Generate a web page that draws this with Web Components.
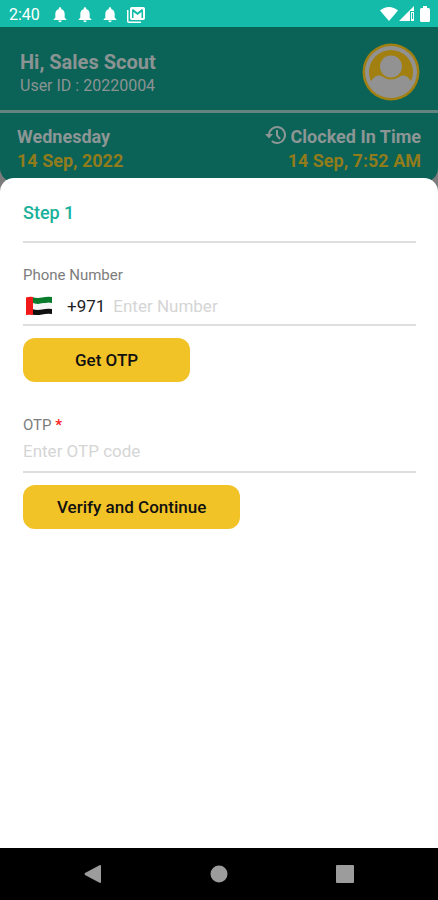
<!DOCTYPE html>
<html lang="en">
<head>
<meta charset="utf-8">
<meta name="viewport" content="width=device-width, initial-scale=1">
<title>Sales Scout</title>
<style>
html, body { height: 100%; margin: 0; }
body { font-family: Roboto, "Liberation Sans", sans-serif; background: #7b7b7b; }
</style>
</head>
<body>
<scout-app></scout-app>
<script>
const define = (name, html, setup = () => {}) => {
  const template = document.createElement('template');
  template.innerHTML = html;
  customElements.define(name, class extends HTMLElement {
    constructor() {
      super();
      this.attachShadow({ mode: 'open' }).append(template.content.cloneNode(true));
      setup(this, this.shadowRoot);
    }
  });
};

define('status-bar', `
<style>
:host { display: flex; align-items: center; height: 27px; padding: 0 8px 0 9px; background: #13bba8; color: #fff; box-sizing: border-box; }
time { font-size: 16px; line-height: 20px; padding-top: 2px; }
svg { display: block; fill: currentColor; }
.notes { display: flex; align-items: center; gap: 9px; margin-left: 12px; padding-top: 2px; }
.signals { display: flex; align-items: center; gap: 1px; margin-left: auto; }
</style>
<time>2:40</time>
<div class="notes">
  <svg width="16" height="16" viewBox="0 0 24 24"><path id="b" d="M12 23a2.6 2.6 0 0 0 2.6-2.6H9.4A2.6 2.6 0 0 0 12 23zm7-7v-6c0-3.5-2-6-5-6.800V2.500a2 2 0 0 0-4 0v.7C7 4 5 6.500 5 10v6l-2.500 2.500v1h19v-1z"/></svg>
  <svg width="16" height="16" viewBox="0 0 24 24"><use href="#b"/></svg>
  <svg width="16" height="16" viewBox="0 0 24 24"><use href="#b"/></svg>
  <svg width="18" height="16" viewBox="0 0 18 16"><path d="M0 3h1.500v11.500H14V16H1.800Q0 16 0 14.200z"/><path fill-rule="evenodd" d="M4.800 0h11.400Q18 0 18 1.800v9.400q0 1.800-1.800 1.800H4.800Q3 13 3 11.200V1.800Q3 0 4.800 0zM5 3v8h1.500V5l4 3 4-3v6H16V3l-1-1-4.500 3.500L6 2z"/></svg>
</div>
<div class="signals">
  <svg width="18" height="14" viewBox="0 0 18 14"><path d="M9 14 0 3.500Q4 0 9 0t9 3.500z"/></svg>
  <svg width="16" height="15" viewBox="0 0 16 15"><path d="M15 0v5h-4v10H0z"/><path d="M12 6h3v7h-1V7h-1v6h-1zM12 13h3v2h-3z"/></svg>
  <svg width="10" height="16" viewBox="0 0 10 16" style="margin-left:4px"><path d="M3 0h4v2h1.500Q10 2 10 3.500v11Q10 16 8.500 16h-7Q0 16 0 14.500v-11Q0 2 1.500 2H3z"/></svg>
</div>`);

define('user-header', `
<style>
:host { display: flex; align-items: center; justify-content: space-between; height: 86px; padding: 6px 18px 0 20px; box-sizing: border-box; background: #0b6257; color: #8b9393; border-bottom: 3px solid #648480; }
h1 { margin: 0; font-size: 20px; line-height: 24px; font-weight: 700; }
p { margin: 0; font-size: 16px; line-height: 24px; }
.text { padding-top: 5px; }
svg { display: block; }
</style>
<div class="text"><h1><slot name="greeting"></slot></h1><p><slot name="id"></slot></p></div>
<svg width="58" height="58" viewBox="0 0 58 58" role="img" aria-label="Profile">
  <clipPath id="c"><circle cx="29" cy="29" r="23"/></clipPath>
  <circle cx="29" cy="29" r="28.500" fill="#a18011"/><circle cx="29" cy="29" r="26" fill="#929292"/>
  <circle cx="29" cy="29" r="22" fill="#a18011"/>
  <g clip-path="url(#c)"><path d="M8 54V41q2-7 8-8.500 3-.5 5 1.500 8 5 16 0 2-2 5-1.500 6 1.500 8 8.500v13z" fill="#929292"/></g>
  <circle cx="29" cy="23.500" r="11" fill="#929292"/>
</svg>`);

define('clock-summary', `
<style>
:host { display: flex; justify-content: space-between; height: 69px; padding: 12px 17px 0; box-sizing: border-box; background: #0b6257; color: #8b9695; font-size: 18px; line-height: 24px; font-weight: 700; border-radius: 0 0 14px 14px; }
.end { text-align: right; }
.row { display: flex; align-items: center; justify-content: flex-end; gap: 4px; }
.date { color: #917c1c; }
svg { display: block; margin-top: -4px; }
</style>
<div><div><slot name="day"></slot></div><div class="date"><slot name="date"></slot></div></div>
<div class="end">
  <div class="row"><svg width="22" height="20" viewBox="0 0 22 20" fill="none" stroke="currentColor" stroke-width="2"><path d="M4 10a8 8 0 1 1 2.800 6.100M12 5v5.500l3 3.500"/><path d="M0 9h8l-4 4.500z" fill="currentColor" stroke="none"/></svg><span><slot name="label"></slot></span></div>
  <div class="date"><slot name="time"></slot></div>
</div>`);

define('form-field', `
<style>
:host { display: block; border-bottom: 2px solid #dedede; }
label { display: block; font-size: 15px; line-height: 20px; color: #7d7d7d; }
label span { color: #f22; font-weight: 700; }
.line { display: flex; align-items: center; padding: var(--line-padding, 4px 0 8px); }
input { flex: 1; min-width: 0; border: 0; outline: 0; padding: 0; margin: 0; background: none; font: 17px/24px Roboto, "Liberation Sans", sans-serif; height: 24px; color: #222; }
input::placeholder { color: #d5d5d5; opacity: 1; }
</style>
<label for="field"></label>
<div class="line"><slot></slot><input id="field" autocomplete="off"></div>`, (host, root) => {
  const label = root.querySelector('label');
  label.textContent = host.getAttribute('label');
  if (host.hasAttribute('required')) {
    const mark = document.createElement('span');
    mark.textContent = ' *';
    label.append(mark);
  }
  const input = root.querySelector('input');
  input.placeholder = host.getAttribute('hint');
  input.type = host.getAttribute('kind') || 'text';
});

define('dial-code', `
<style>
:host { display: flex; align-items: center; gap: 14px; margin-right: 8px; padding-left: 3px; color: #222; font-size: 17px; line-height: 24px; }
svg { display: block; }
</style>
<svg width="27" height="20" viewBox="0 0 27 20" role="img" aria-label="United Arab Emirates">
  <path d="M6 1q5 1.500 10 .5T26 1v6q-5-.5-10 .5T6 7z" fill="#087c2b"/>
  <path d="M6 7q5 1.500 10 .5T26 7v6q-5-.5-10 .5T6 13z" fill="#f5f5f5"/>
  <path d="M6 13q5 1.500 10 .5T26 13v5q-5-.5-10 .5T6 18.500z" fill="#111"/>
  <path d="M0 1.500Q3 .5 7 1v18q-4-.5-7 0z" fill="#f01818"/>
</svg>
<span><slot></slot></span>`);

define('action-button', `
<style>
:host { display: block; }
button { display: block; height: 44px; padding: 0 var(--pad, 34px); border: 0; border-radius: 12px; background: #f1c327; color: #111; font: 500 17px/24px Roboto, "Liberation Sans", sans-serif; cursor: pointer; }
</style>
<button type="button"><slot></slot></button>`);

define('step-sheet', `
<style>
:host { display: block; flex: 1; box-sizing: border-box; margin-top: -4px; padding: 23px 22px 0 23px; background: #fff; border-radius: 14px 14px 0 0; }
h2 { margin: 0 0 22px; padding-bottom: 16px; font-size: 18px; line-height: 24px; font-weight: 500; color: #19b19b; border-bottom: 2px solid #dedede; }
action-button { margin: 12px 0 33px; }
.phone { --line-padding: 9px 0 6px; }
.get { --pad: 52px; }
</style>
<h2>Step 1</h2>
<form-field class="phone" label="Phone Number" hint="Enter Number" kind="tel"><dial-code>+971</dial-code></form-field>
<action-button class="get">Get OTP</action-button>
<form-field label="OTP" hint="Enter OTP code" required></form-field>
<action-button>Verify and Continue</action-button>`);

define('nav-bar', `
<style>
:host { display: grid; grid-template-columns: 1fr 1fr 1fr; align-items: center; height: 52px; padding: 0 30px; box-sizing: border-box; background: #000; }
button { display: flex; justify-content: center; padding: 0; border: 0; background: none; }
svg { display: block; fill: #9c9c9c; }
</style>
<button aria-label="Back"><svg width="18" height="18" viewBox="0 0 18 18"><path d="M16 0q1 0 1 1v16q0 1-1 1L1 10q-1-1 0-2z"/></svg></button>
<button aria-label="Home"><svg width="18" height="18" viewBox="0 0 18 18"><circle cx="9" cy="9" r="8.500"/></svg></button>
<button aria-label="Recent apps"><svg width="18" height="18" viewBox="0 0 18 18"><rect width="18" height="18" rx="1"/></svg></button>`);

define('scout-app', `
<style>
:host { display: flex; flex-direction: column; min-height: 100vh; }
</style>
<status-bar></status-bar>
<user-header><span slot="greeting">Hi, Sales Scout</span><span slot="id">User ID : 20220004</span></user-header>
<clock-summary><span slot="day">Wednesday</span><span slot="date">14 Sep, 2022</span><span slot="label">Clocked In Time</span><span slot="time">14 Sep, 7:52 AM</span></clock-summary>
<step-sheet></step-sheet>
<nav-bar></nav-bar>`);
</script>
</body>
</html>
